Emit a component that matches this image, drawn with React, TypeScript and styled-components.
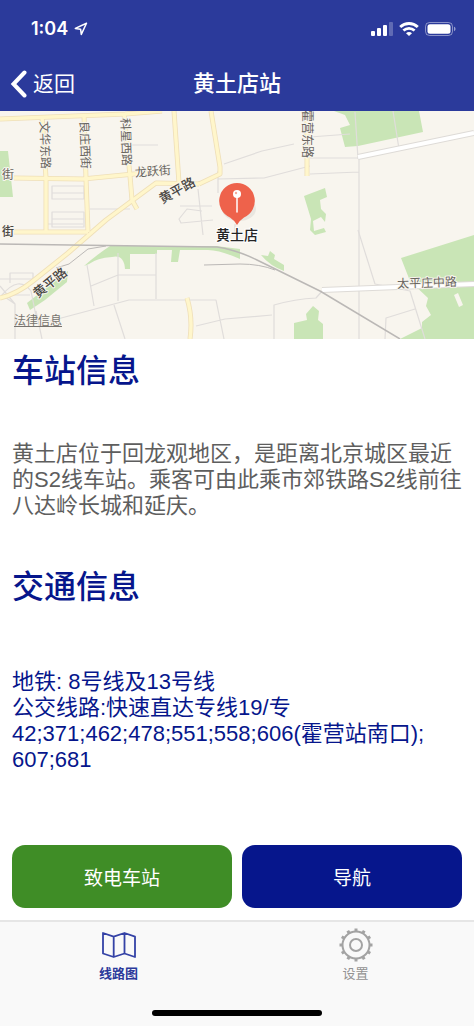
import React from "react";
import styled, { createGlobalStyle } from "styled-components";

const GlobalStyle = createGlobalStyle`
  *, *::before, *::after { box-sizing: border-box; }
  body {
    margin: 0;
    background: #ffffff;
    font-family: "Liberation Sans", "Noto Sans CJK SC", sans-serif;
    -webkit-font-smoothing: antialiased;
  }
  h1, h2, p { margin: 0; }
  button { font: inherit; border: 0; padding: 0; cursor: pointer; }
`;

const Screen = styled.div`
  display: flex;
  flex-direction: column;
  min-height: 100vh;
`;

const TopBar = styled.header`
  background: #2b3a9b;
  color: #ffffff;
`;

const StatusBar = styled.div`
  display: flex;
  align-items: center;
  justify-content: space-between;
  height: 56px;
  padding: 2px 18px 0 31px;
`;

const StatusGroup = styled.div<{ $gap: number }>`
  display: flex;
  align-items: center;
  gap: ${(p) => p.$gap}px;
`;

const Clock = styled.span`
  font-family: Inter, sans-serif;
  font-size: 18px;
  line-height: 24px;
  font-weight: 600;
`;

const NavBar = styled.nav`
  display: grid;
  grid-template-columns: 1fr auto 1fr;
  align-items: center;
  height: 55px;
  padding: 0 10px;
`;

const BackButton = styled.button`
  display: flex;
  align-items: center;
  gap: 6px;
  justify-self: start;
  background: none;
  color: inherit;
  font-size: 21px;
  line-height: 32px;
`;

const Title = styled.h1`
  font-size: 22px;
  line-height: 32px;
  font-weight: 500;
`;

const MapView = styled.section`
  position: relative;
  height: 228px;
  overflow: hidden;
  background: #f8f5ee;
`;

const MapCanvas = styled.svg`
  display: block;
  width: 100%;
  height: 100%;
`;

const LegalLink = styled.a`
  position: absolute;
  left: 14px;
  bottom: 9px;
  color: #77746f;
  font-size: 12px;
  line-height: 18px;
`;

const Content = styled.main`
  display: flex;
  flex-direction: column;
  flex: 1;
  padding: 8px 12px 12px;
`;

const Heading = styled.h2`
  color: #06168c;
  font-size: 32px;
  line-height: 48px;
  font-weight: 500;
`;

const Paragraph = styled.p<{ $color: string; $top: number }>`
  margin: ${(p) => p.$top}px 0 44px;
  color: ${(p) => p.$color};
  font-size: 22px;
  line-height: 26px;
`;

const Actions = styled.div`
  display: grid;
  grid-template-columns: 1fr 1fr;
  gap: 10px;
  margin-top: auto;
`;

const ActionButton = styled.button<{ $color: string }>`
  height: 63px;
  border-radius: 13px;
  background: ${(p) => p.$color};
  color: #ffffff;
  font-size: 19px;
`;

const TabBar = styled.nav`
  display: grid;
  grid-template-columns: 1fr 1fr;
  border-top: 2px solid #e6e6e6;
  background: #f9f9f9;
`;

const Tab = styled.button<{ $active?: boolean }>`
  display: flex;
  flex-direction: column;
  align-items: center;
  gap: 1px;
  padding-top: 5px;
  background: none;
  color: ${(p) => (p.$active ? "#2b3a9b" : "#929292")};
  font-size: 13px;
  line-height: 20px;
  font-weight: ${(p) => (p.$active ? 700 : 400)};
`;

const HomeArea = styled.div`
  display: flex;
  justify-content: center;
  padding: 26px 0 10px;
  background: #f9f9f9;
`;

const HomeIndicator = styled.div`
  width: 36%;
  height: 6px;
  border-radius: 3px;
  background: #000000;
`;

const LocationIcon = () => (
  <svg width="14" height="14" viewBox="0 0 14 14" fill="none" aria-hidden="true">
    <path d="M12.5 1.3 1.3 6.4l5.3.8.7 5.2z" stroke="#fff" strokeWidth="1.5" strokeLinejoin="round" />
  </svg>
);

const SignalIcon = () => (
  <svg width="22" height="14" viewBox="0 0 22 14" fill="#fff" aria-hidden="true">
    <rect x="0" y="9" width="4" height="5" rx="1" />
    <rect x="6" y="6" width="4" height="8" rx="1" />
    <rect x="12" y="3" width="4" height="11" rx="1" />
    <rect x="18" y="0" width="4" height="14" rx="1" opacity="0.25" />
  </svg>
);

const WifiIcon = () => (
  <svg width="20" height="14" viewBox="0 0 20 14" fill="none" stroke="#fff" aria-hidden="true">
    <path d="M1.2 5C6.2.3 13.8.3 18.8 5" strokeWidth="2.9" />
    <path d="M4.4 8.6c3.200-3 8-3 11.200 0" strokeWidth="2.7" />
    <path d="M7 11.200c1.700-1.700 4.300-1.700 6 0L10 14z" fill="#fff" stroke="none" />
  </svg>
);

const BatteryIcon = () => (
  <svg width="31" height="14" viewBox="0 0 31 14" aria-hidden="true">
    <rect x="0.5" y="0.5" width="27" height="13" rx="4" fill="none" stroke="#fff" strokeOpacity="0.45" />
    <rect x="2.5" y="2.2" width="23" height="9.6" rx="2.5" fill="#fff" />
    <path d="M29 4.8c2 .6 2 3.8 0 4.4z" fill="#fff" opacity="0.5" />
  </svg>
);

const ChevronIcon = () => (
  <svg width="17" height="28" viewBox="0 0 17 28" fill="none" aria-hidden="true">
    <path d="M14.5 2.5 3.5 14l11 11.5" stroke="#fff" strokeWidth="4" strokeLinecap="round" />
  </svg>
);

const FoldedMapIcon = () => (
  <svg width="36" height="36" viewBox="0 0 36 36" fill="none" aria-hidden="true">
    <path
      d="M2 6 12.7 9.7 23.5 6 34 9.7V30L23.5 26.500 12.700 30 2 26.500zM12.700 9.700V30M23.500 6V26.500"
      stroke="#3442a6"
      strokeWidth="1.8"
      strokeLinejoin="round"
    />
  </svg>
);

const teeth = Array.from({ length: 12 }, (_, i) => i * 30);

const GearIcon = () => (
  <svg width="36" height="36" viewBox="0 0 36 36" fill="none" stroke="#a3a3a3" aria-hidden="true">
    <circle cx="18" cy="18" r="13.500" strokeWidth="2" />
    <circle cx="18" cy="18" r="6" strokeWidth="2" />
    {teeth.map((angle) => (
      <path key={angle} d="M18 1.500V4.500" strokeWidth="3" transform={`rotate(${angle} 18 18)`} />
    ))}
  </svg>
);

const parks = [
  "M334 0H419L423 21 358 35 345 36 340 17 350 14 345 4z",
  "M0 40H8L13 86H0z",
  "M304 85 325 77 327 86 320 89 321 98 326 103 325 111 321 106 313 110 314 120 324 117 326 121 315 124 310 119 311 108z",
  "M474 124 401 147 410 170 428 187 426 195 431 204 422 211V217L400 228H474z",
  "M84 155Q95 145 110 135H216L240 138V148Q220 139 208 139H180L178 151H171L172 139H157V143H130V158H125Q124 143 112 146 97 147 89 153z",
  "M68 160 50 174 27 192 30 199 45 189 67 171z",
  "M261 144 268 145 270 140 275 144 274 148 284 154V160Q270 155 261 144z",
  "M294 212 307 209 306 203 313 195 319 200 318 209 323 213V228H294z",
];

const lanes = [
  "M121 34H158M90 98H130M310 26 350 23M310 47H358M0 168H32M10 172V162H33V168H10",
  "M359 48V228M355 1 358 48M393 0 399 38M310 63 359 61",
  "M224 53 262 40 294 33M218 68 264 67 310 55",
  "M218 60V82M180 95H212M198 78 203 124M202 100 187 98 179 108 181 112 213 109M235 113V123",
  "M52 75H84V88H52zM52 82H84M52 101H84V116H52zM52 108H84M44 113H83",
  "M0 175 15 193 2 184Q19 164 31 180L36 205M15 193V228M4 184 30 184M36 200 42 228",
  "M87 154 94 195M91 175 118 164H156M118 142V190M156 142V188M50 210 129 189H216L224 228M114 194 125 228M196 215 225 208 272 204",
  "M274 228V194Q295 188 316 187L324 178M358 119 375 173 410 180 425 228M415 198 386 207 385 228",
];

const yellowRoads = [
  "M0 8 125 3 162 0",
  "M14 67 83 68 154 61 170 62",
  "M42 5 46 67V120M84 4 86 68 88 121M124 2 130 65 132 89 137 98M14 121 88 121",
  "M174 0 179 72M211 0 220 56V63L199 73",
  "M307 0V65",
  "M187 187Q193 207 190 228",
  "M0 187Q17 183 33 170L68 142 106 109 156 72 199 73",
];

const StationMap = () => (
  <MapCanvas viewBox="0 0 474 228" preserveAspectRatio="xMidYMid slice" role="img" aria-label="黄土店">
    {parks.map((d) => (
      <path key={d} d={d} fill="#c9e5b6" />
    ))}
    <path d="M454 184 458 182 463 194 459 196z" fill="#f8f5ee" />
    <g fill="none" strokeLinejoin="round">
      {lanes.map((d) => (
        <path key={d} d={d} stroke="#e0dddb" strokeWidth="1.200" />
      ))}
      <path d="M358 46 474 22M322 179 474 173" stroke="#dedbd7" strokeWidth="6" />
      <path d="M358 46 474 22M322 179 474 173" stroke="#ffffff" strokeWidth="4" />
      {yellowRoads.map((d) => (
        <path key={d} d={d} stroke="#efdfb8" strokeWidth="5" />
      ))}
      {yellowRoads.map((d) => (
        <path key={d} d={d} stroke="#fff6cb" strokeWidth="3.400" />
      ))}
      <g stroke="#bbb8b6">
        <path d="M0 133 70 134 217 136Q237 139 257 149L320 180 400 228" strokeWidth="1.500" />
        <path d="M56 157 69 153 88 138 106 135M204 154 240 153Q260 153 275 159" />
      </g>
    </g>
    <g
      fill="#69655f"
      fontSize="12"
      stroke="#f8f5ee"
      strokeWidth="2"
      paintOrder="stroke"
      strokeLinejoin="round"
      dominantBaseline="central"
    >
      <text transform="translate(44 10) rotate(88)">文华东路</text>
      <text transform="translate(84 10) rotate(88)">良庄西街</text>
      <text transform="translate(125 7) rotate(88)">科星西路</text>
      <text transform="translate(307 -1) rotate(90)">霍营东路</text>
      <text transform="translate(135 62) rotate(-5)">龙跃街</text>
      <text x="2" y="64">街</text>
      <text transform="translate(397 173) rotate(-2)">太平庄中路</text>
      <g fill="#4a4744" fontWeight="500">
        <text x="2" y="121">街</text>
        <text fontSize="13" transform="translate(160 89) rotate(-29)">黄平路</text>
        <text fontSize="13" transform="translate(35 184) rotate(-39)">黄平路</text>
      </g>
    </g>
    <ellipse cx="239" cy="98" rx="17" ry="12" fill="#000000" opacity="0.06" />
    <path d="M237 72a18 18 0 0 1 7 34.500Q240 109 237 114 234 109 230 106.500A18 18 0 0 1 237 72z" fill="#ee624b" />
    <path d="M237 86V101" stroke="#ffffff" strokeWidth="1.500" strokeLinecap="round" />
    <circle cx="237" cy="83" r="4" fill="#ffffff" />
    <circle cx="236" cy="82" r="1.200" fill="#f4aa9c" />
    <text
      x="237"
      y="129"
      textAnchor="middle"
      fontSize="14"
      fontWeight="500"
      fill="#242424"
      stroke="#ffffff"
      strokeWidth="2"
      paintOrder="stroke"
    >
      黄土店
    </text>
  </MapCanvas>
);

export default function App() {
  return (
    <Screen lang="zh-CN">
      <GlobalStyle />
      <TopBar>
        <StatusBar>
          <StatusGroup $gap={6}>
            <Clock>1:04</Clock>
            <LocationIcon />
          </StatusGroup>
          <StatusGroup $gap={6}>
            <SignalIcon />
            <WifiIcon />
            <BatteryIcon />
          </StatusGroup>
        </StatusBar>
        <NavBar>
          <BackButton type="button">
            <ChevronIcon />
            返回
          </BackButton>
          <Title>黄土店站</Title>
        </NavBar>
      </TopBar>
      <MapView>
        <StationMap />
        <LegalLink href="#legal">法律信息</LegalLink>
      </MapView>
      <Content>
        <Heading>车站信息</Heading>
        <Paragraph $color="#5e5e5e" $top={46}>
          黄土店位于回龙观地区，是距离北京城区最近的S2线车站。乘客可由此乘市郊铁路S2线前往八达岭长城和延庆。
        </Paragraph>
        <Heading>交通信息</Heading>
        <Paragraph $color="#06168c" $top={58}>
          地铁: 8号线及13号线
          <br />
          公交线路:快速直达专线19/专
          <br />
          42;371;462;478;551;558;606(霍营站南口);
          <br />
          607;681
        </Paragraph>
        <Actions>
          <ActionButton type="button" $color="#3f8d26">致电车站</ActionButton>
          <ActionButton type="button" $color="#06168c">导航</ActionButton>
        </Actions>
      </Content>
      <TabBar>
        <Tab type="button" $active>
          <FoldedMapIcon />
          线路图
        </Tab>
        <Tab type="button">
          <GearIcon />
          设置
        </Tab>
      </TabBar>
      <HomeArea>
        <HomeIndicator />
      </HomeArea>
    </Screen>
  );
}
